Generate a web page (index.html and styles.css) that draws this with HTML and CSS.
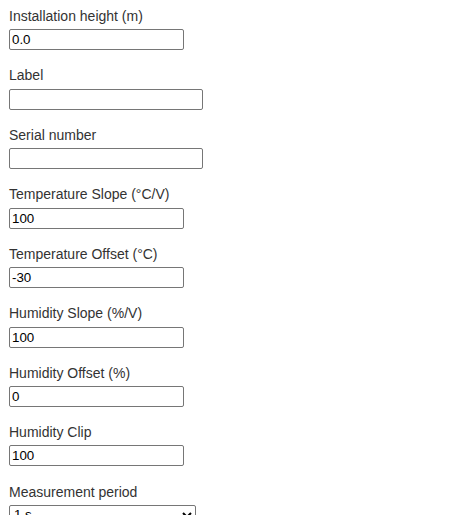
FILE: index.html
```html
<!DOCTYPE html>
<html>
<head>
<meta charset="utf-8">
<link rel="stylesheet" href="styles.css">
</head>
<body>
<form class="form">
  <div class="field">
    <label class="lbl">Installation height (m)</label>
    <input class="inp num" type="text" value="0.0">
  </div>
  <div class="field">
    <label class="lbl">Label</label>
    <input class="inp txt" type="text" value="">
  </div>
  <div class="field">
    <label class="lbl">Serial number</label>
    <input class="inp txt" type="text" value="">
  </div>
  <div class="field">
    <label class="lbl">Temperature Slope (°C/V)</label>
    <input class="inp num" type="text" value="100">
  </div>
  <div class="field">
    <label class="lbl">Temperature Offset (°C)</label>
    <input class="inp num" type="text" value="-30">
  </div>
  <div class="field">
    <label class="lbl">Humidity Slope (%/V)</label>
    <input class="inp num" type="text" value="100">
  </div>
  <div class="field">
    <label class="lbl">Humidity Offset (%)</label>
    <input class="inp num" type="text" value="0">
  </div>
  <div class="field">
    <label class="lbl">Humidity Clip</label>
    <input class="inp num" type="text" value="100">
  </div>
  <div class="field">
    <label class="lbl">Measurement period</label>
    <select class="sel">
      <option>1 s</option>
    </select>
  </div>
</form>
</body>
</html>
```
FILE: styles.css
```css
html, body {
  margin: 0;
  padding: 0;
  background: #fff;
}
body {
  font-family: "Liberation Sans", Arial, sans-serif;
  font-size: 14px;
  color: #333;
}
.form {
  display: flex;
  flex-direction: column;
  gap: 17.4px;
  padding: 8px 9px 0 9px;
}
.field {
  display: flex;
  flex-direction: column;
  align-items: flex-start;
}
.lbl {
  display: block;
  line-height: 16.1px;
  margin-bottom: 5px;
}
.inp {
  box-sizing: border-box;
  height: 21px;
  margin: 0;
  padding: 1px 2px;
  border: 1px solid #767676;
  border-radius: 2px;
  font-family: "Liberation Sans", Arial, sans-serif;
  font-size: 13.333px;
  color: #000;
  background: #fff;
}
.num { width: 175px; }
.txt { width: 194px; }
.sel {
  box-sizing: border-box;
  width: 187px;
  height: 20px;
  margin: 0;
  font-family: "Liberation Sans", Arial, sans-serif;
  font-size: 13.333px;
  color: #000;
  background: #fff;
  border: 1px solid #767676;
  border-radius: 2px;
}
```
